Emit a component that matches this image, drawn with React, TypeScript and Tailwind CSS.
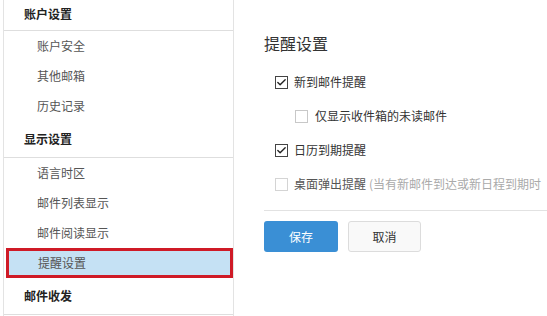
import { Check } from "lucide-react";

const font = { fontFamily: '"Noto Sans CJK SC", "Microsoft YaHei", sans-serif' };

type Group = { title: string; items: string[] };

const groups: Group[] = [
  { title: "账户设置", items: ["账户安全", "其他邮箱", "历史记录"] },
  { title: "显示设置", items: ["语言时区", "邮件列表显示", "邮件阅读显示", "提醒设置"] },
  { title: "邮件收发", items: [] },
];

function Box({ checked, muted }: { checked?: boolean; muted?: boolean }) {
  return (
    <span
      className={`flex h-[13px] w-[13px] shrink-0 items-center justify-center border bg-white ${
        muted ? "border-[#d4d4d4]" : checked ? "border-[#444]" : "border-[#c8c8c8]"
      }`}
    >
      {checked && <Check className="h-[11px] w-[11px] text-[#222]" strokeWidth={3} />}
    </span>
  );
}

export default function App() {
  return (
    <div className="flex h-[316px] w-[547px] overflow-hidden bg-white" style={font}>
      {/* Sidebar */}
      <div className="ml-[3px] w-[231px] shrink-0 border-x border-[#e3e3e3]">
        {groups.map((g, gi) => (
          <div key={g.title}>
            <div
              className={`flex items-center border-b border-[#dedede] pl-[20px] text-[12px] font-bold text-[#222] ${
                gi === 0 ? "h-[31px] pb-[3px]" : "h-[37px]"
              }`}
            >
              {g.title}
            </div>
            {g.items.map((it) => {
              const active = it === "提醒设置";
              return (
                <div
                  key={it}
                  className={
                    active
                      ? "ml-[2px] flex h-[30px] items-center border-[3px] border-[#cf1a26] bg-[#c5e1f4] pl-[29px] text-[12px] text-[#555]"
                      : "flex h-[30px] items-center pl-[33px] text-[12px] text-[#555]"
                  }
                >
                  {it}
                </div>
              );
            })}
          </div>
        ))}
      </div>

      {/* Content */}
      <div className="flex-1 pl-[30px] pt-[32px]">
        <div className="text-[16px] leading-[22px] text-[#333]">提醒设置</div>

        <div className="mt-[11px] flex flex-col pl-[11px] text-[12px] text-[#333]">
          <label className="flex h-[34px] items-center gap-[6px]">
            <Box checked />
            新到邮件提醒
          </label>
          <label className="flex h-[34px] items-center gap-[7px] pl-[20px]">
            <Box />
            仅显示收件箱的未读邮件
          </label>
          <label className="flex h-[34px] items-center gap-[6px]">
            <Box checked />
            日历到期提醒
          </label>
          <label className="flex h-[34px] items-center gap-[6px] whitespace-nowrap">
            <Box muted />
            <span className="text-[#555]">桌面弹出提醒</span>
            <span className="-ml-[3px] text-[#aaa]">(当有新邮件到达或新日程到期时</span>
          </label>
        </div>

        <div className="mt-[9px] border-t border-[#e2e2e2]" />

        <div className="mt-[10px] flex gap-[10px] text-[12px]">
          <button className="flex h-[31px] w-[74px] items-center justify-center rounded-[3px] bg-[#3a8fd5] text-white">
            保存
          </button>
          <button className="flex h-[31px] w-[73px] items-center justify-center rounded-[3px] border border-[#dcdcdc] bg-[#f9f9f9] text-[#333]">
            取消
          </button>
        </div>
      </div>
    </div>
  );
}
